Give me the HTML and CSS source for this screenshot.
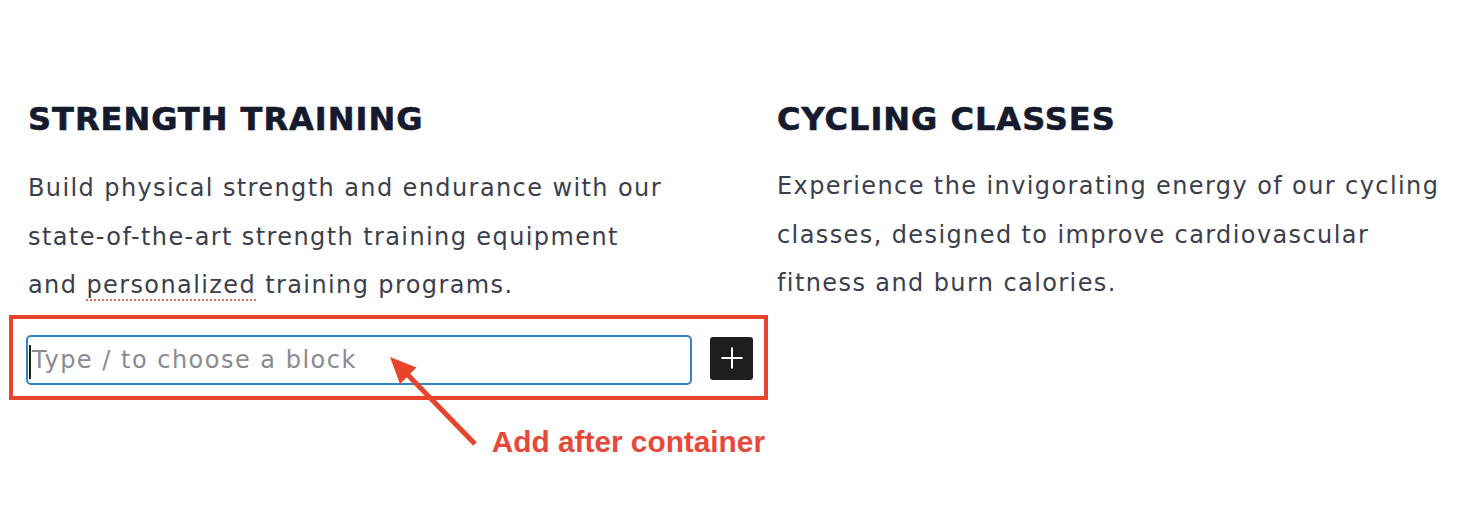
FILE: index.html
```html
<!DOCTYPE html>
<html lang="en">
<head>
<meta charset="utf-8">
<title>Services</title>
<link rel="stylesheet" href="styles.css">
</head>
<body>
<div class="page">
  <div class="columns">
    <section class="col col-left">
      <h2 class="title">STRENGTH TRAINING</h2>
      <p class="text">Build physical strength and endurance with our state-of-the-art strength training equipment and <span class="spell">personalized</span> training programs.</p>
      <div class="inserter">
        <div class="block-input"><span class="caret"></span><span class="placeholder">Type / to choose a block</span></div>
        <button class="add-btn" type="button" aria-label="Add block">
          <svg width="24" height="24" viewBox="0 0 24 24"><path d="M12 1.5v21M1.5 12h21" stroke="#fff" stroke-width="2" fill="none"/></svg>
        </button>
      </div>
      <div class="note">Add after container</div>
    </section>
    <section class="col col-right">
      <h2 class="title">CYCLING CLASSES</h2>
      <p class="text">Experience the invigorating energy of our cycling classes, designed to improve cardiovascular fitness and burn calories.</p>
    </section>
  </div>
  <svg class="arrow" width="1482" height="518" viewBox="0 0 1482 518">
    <line x1="475" y1="444" x2="404" y2="371" stroke="#e8432b" stroke-width="5"/>
    <polygon points="390,357 416.5,367.5 400,384" fill="#e8432b"/>
  </svg>
</div>
</body>
</html>
```
FILE: styles.css
```css
body {
  margin: 0;
  background: #ffffff;
  font-family: "DejaVu Sans", Inter, sans-serif;
}

.page {
  position: relative;
  width: 1482px;
  height: 518px;
  padding: 100px 0 0 28px;
  box-sizing: border-box;
  overflow: hidden;
}

.columns {
  display: grid;
  grid-template-columns: 664px 1fr;
  column-gap: 85px;
}

.title {
  margin: 0;
  font-family: "DejaVu Sans", Inter, sans-serif;
  font-weight: 700;
  font-size: 32px;
  line-height: 38.4px;
  color: #161a2d;
  letter-spacing: 1px;
  -webkit-text-stroke: 0.6px #161a2d;
}

.text {
  margin: 26px 0 0;
  font-size: 24px;
  line-height: 48.5px;
  letter-spacing: 1.4px;
  color: #3b3e4c;
  max-width: 670px;
}

.col-left .text {
  max-width: 642px;
}

.col-right .text {
  margin-top: 24px;
}

.spell {
  text-decoration: underline dotted #e56a5b;
  text-decoration-thickness: 2px;
  text-underline-offset: 6px;
}

.inserter {
  display: flex;
  align-items: center;
  gap: 18px;
  width: 759px;
  box-sizing: border-box;
  margin: 5px 0 0 -19px;
  padding: 16px 11px 11px 13px;
  border: 4px solid #e8432b;
}

.block-input {
  display: flex;
  align-items: center;
  width: 666px;
  height: 50px;
  box-sizing: border-box;
  border: 2px solid #3582c4;
  border-radius: 5px;
  padding-left: 1px;
}

.caret {
  width: 2px;
  height: 34px;
  background: #1e1e1e;
  margin-top: 5px;
}

.placeholder {
  font-size: 24px;
  letter-spacing: 1.5px;
  color: #8a8a91;
  margin-left: 1px;
}

.add-btn {
  width: 43px;
  height: 43px;
  margin-top: -3px;
  padding: 0;
  border: 0;
  border-radius: 3px;
  background: #1e1e1e;
  display: flex;
  align-items: center;
  justify-content: center;
}

.note {
  width: 756px;
  margin: 25px 0 0 -19px;
  text-align: right;
  font-family: "Liberation Sans", Arial, sans-serif;
  font-weight: 700;
  font-size: 29.8px;
  line-height: 33px;
  color: #e9473a;
}

.arrow {
  position: absolute;
  top: 0;
  left: 0;
  pointer-events: none;
}
```
